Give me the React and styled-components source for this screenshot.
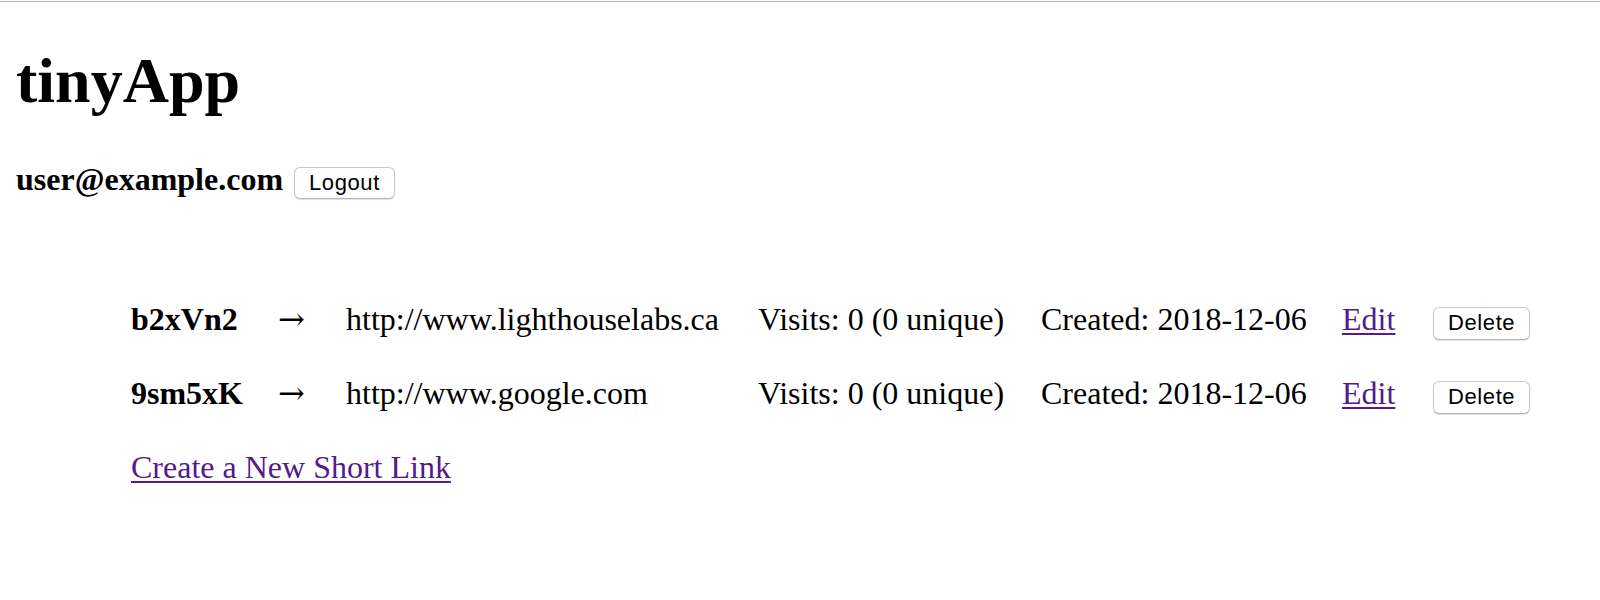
import React from "react";
import styled, { createGlobalStyle } from "styled-components";

const GlobalStyle = createGlobalStyle`
   html, body {
      margin: 0;
      padding: 0;
      background: #fff;
   }
   body {
      font-family: "Liberation Serif", "Times New Roman", serif;
      font-size: 32px;
      color: #000;
   }
`;

const Page = styled.div`
   margin-top: 1px;
   border-top: 1px solid #b4b4b4;
   padding: 0 16px 40px 16px;
   min-height: 598px;
   box-sizing: border-box;
`;

const Title = styled.h1`
   font-size: 64px;
   font-weight: bold;
   line-height: 74px;
   margin: 42px 0 0 0;
`;

const UserBar = styled.div`
   display: flex;
   align-items: baseline;
   gap: 11px;
   margin-top: 43px;
`;

const Email = styled.strong`
   font-size: 32px;
   line-height: 37px;
`;

const Button = styled.button`
   box-sizing: border-box;
   height: ${({ tall }) => (tall ? "33px" : "32px")};
   padding: 3px 14px 3px;
   font-family: "Liberation Sans", Arial, sans-serif;
   font-size: 22px;
   line-height: 24px;
   letter-spacing: 0.6px;
   color: #000;
   background: #fff;
   border: 1px solid #c8c8c8;
   border-bottom-color: #b4b4b4;
   border-radius: 6px;
   box-shadow: 0 1px 1px rgba(0, 0, 0, 0.12);
`;

const UrlList = styled.div`
   display: flex;
   flex-direction: column;
   gap: 37px;
   margin: 102px 0 0 115px;
`;

const UrlRow = styled.div`
   display: grid;
   grid-template-columns: 147px 68px 412px 283px 301px 91px auto;
   align-items: baseline;
   height: 37px;
   line-height: 37px;
`;

const ShortCode = styled.strong`
   font-size: 32px;
`;

const Cell = styled.span`
   white-space: nowrap;
`;

const Arrow = styled.span`
   font-family: "DejaVu Serif", "Liberation Serif", serif;
   font-size: 32px;
`;

const Link = styled.a`
   color: #551a8b;
   text-decoration: underline;
   text-decoration-thickness: 2px;
   text-underline-offset: 3px;
   line-height: 37px;
   white-space: nowrap;
   justify-self: start;
`;

const urls = [
   {
      id: "b2xVn2",
      longURL: "http://www.lighthouselabs.ca",
      visits: 0,
      unique: 0,
      created: "2018-12-06",
   },
   {
      id: "9sm5xK",
      longURL: "http://www.google.com",
      visits: 0,
      unique: 0,
      created: "2018-12-06",
   },
];

const App = () => {
   return (
      <>
         <GlobalStyle />
         <Page>
            <Title>tinyApp</Title>
            <UserBar>
               <Email>user@example.com</Email>
               <Button>Logout</Button>
            </UserBar>

            <UrlList>
               {urls.map((url) => (
                  <UrlRow key={url.id}>
                     <ShortCode>{url.id}</ShortCode>
                     <Arrow>→</Arrow>
                     <Cell>{url.longURL}</Cell>
                     <Cell>
                        Visits: {url.visits} ({url.unique} unique)
                     </Cell>
                     <Cell>Created: {url.created}</Cell>
                     <Link href="#">Edit</Link>
                     <Cell>
                        <Button tall>Delete</Button>
                     </Cell>
                  </UrlRow>
               ))}
               <UrlRow>
                  <Link href="#" style={{ gridColumn: "1 / -1" }}>
                     Create a New Short Link
                  </Link>
               </UrlRow>
            </UrlList>
         </Page>
      </>
   );
};

export default App;
